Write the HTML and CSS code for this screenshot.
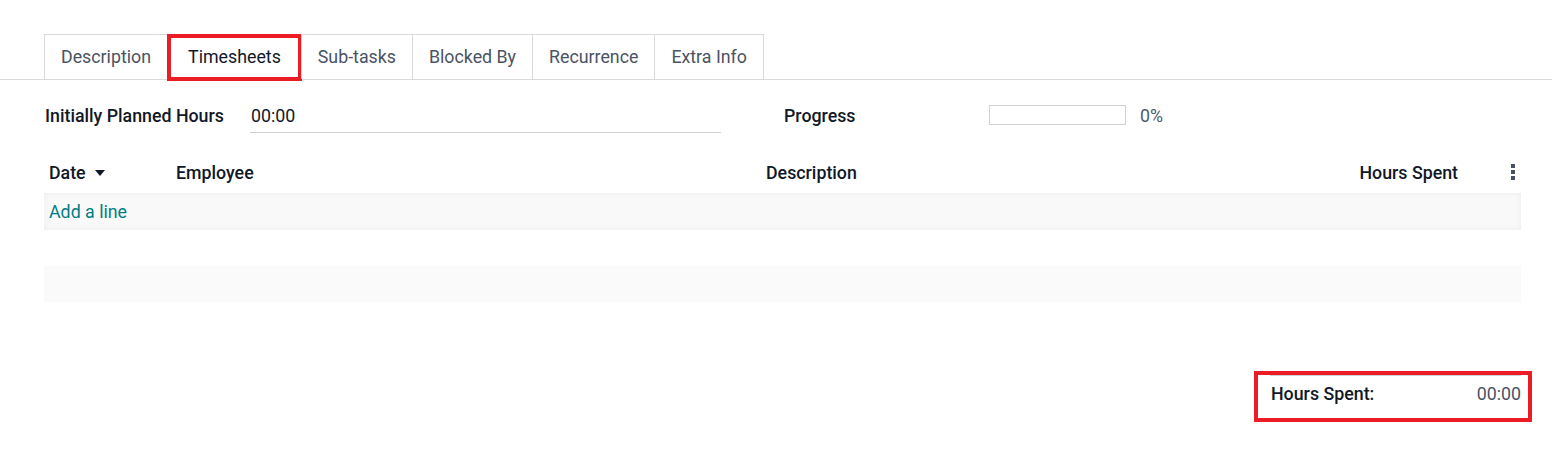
FILE: index.html
```html
<!DOCTYPE html>
<html>
<head>
<meta charset="utf-8">
<link rel="stylesheet" href="styles.css">
</head>
<body>
<div class="page">
  <div class="tabbar">
    <div class="tabs">
      <div class="tab">Description</div>
      <div class="tab active">Timesheets<span class="mark"></span></div>
      <div class="tab">Sub-tasks</div>
      <div class="tab">Blocked By</div>
      <div class="tab">Recurrence</div>
      <div class="tab last">Extra Info</div>
    </div>
  </div>
  <div class="content">
    <div class="fields">
      <div class="label">Initially Planned Hours</div>
      <div class="input">00:00</div>
      <div class="label plabel">Progress</div>
      <div class="progress"><div class="bar"></div><span class="pct">0%</span></div>
    </div>
    <div class="table">
      <div class="thead">
        <div class="th c-date">Date <span class="caret"></span></div>
        <div class="th c-emp">Employee</div>
        <div class="th c-desc">Description</div>
        <div class="th c-hours">Hours Spent</div>
        <div class="th c-opt"><span class="dots"><i></i><i></i><i></i></span></div>
      </div>
      <div class="row addrow"><a class="addline">Add a line</a></div>
      <div class="row empty"></div>
      <div class="row empty shade"></div>
    </div>
    <div class="totals-wrap">
      <div class="totals">
        <span class="tlabel">Hours Spent:</span>
        <span class="tval">00:00</span>
        <span class="mark2"></span>
      </div>
    </div>
  </div>
</div>
</body>
</html>
```
FILE: styles.css
```css
* { box-sizing: border-box; }
html, body { min-height: 476px; }
body {
  margin: 0;
  background: #fff;
  font-family: Roboto, "Noto Sans", sans-serif;
  font-size: 17.8px;
  color: #111827;
}
.page { padding-top: 34px; padding-bottom: 60px; }
.tabbar {
  border-bottom: 1px solid #d8dadd;
  padding-left: 44px;
}
.tabs { display: flex; height: 45px; }
.tab {
  position: relative;
  display: flex;
  align-items: center;
  padding: 0 16px 2px 16px;
  border-top: 1px solid #d8dadd;
  border-left: 1px solid #d8dadd;
  color: #4a5364;
  height: 45px;
}
.tab.last { border-right: 1px solid #d8dadd; }
.tab.active { color: #111827; padding: 0 20px 2px 20px; }
.mark {
  position: absolute;
  left: -1px; right: -1px; top: -1px; bottom: -2px;
  border: 4px solid #ec1c24;
}
.content { padding: 0 31px 0 44px; }
.fields {
  display: flex;
  align-items: center;
  height: 72px;
  padding-bottom: 2px;
}
.label { font-weight: 500; width: 206px; padding-left: 1px; }
.input {
  width: 471px;
  border-bottom: 1px solid #cfd1d4;
  padding: 6px 1px 6px;
  margin-top: 1px;
  color: #111827;
}
.plabel { margin-left: 62px; }
.progress { display: flex; align-items: center; }
.bar {
  width: 137px;
  height: 20px;
  border: 1px solid #cfd1d4;
}
.pct { margin-left: 14px; color: #4a5b6e; }
.thead {
  display: flex;
  align-items: center;
  height: 41px;
  font-weight: 500;
  padding-bottom: 1px;
}
.th { white-space: nowrap; }
.c-date { width: 132px; padding-left: 5px; display: flex; align-items: center; }
.caret {
  display: inline-block;
  width: 0; height: 0;
  border-left: 5px solid transparent;
  border-right: 5px solid transparent;
  border-top: 6px solid #111827;
  margin-left: 9px;
  margin-top: 1px;
}
.c-emp { width: 590px; }
.c-desc { flex: 1; }
.c-hours { width: 200px; text-align: right; }
.c-opt { width: 63px; display: flex; justify-content: flex-end; padding-right: 6px; }
.dots { display: flex; flex-direction: column; gap: 2px; }
.dots i { display: block; width: 4px; height: 4px; background: #4a5364; }
.row { height: 36px; }
.addrow {
  height: 37px;
  background: #f9f9f9;
  box-shadow: inset 0 0 6px rgba(0,0,0,0.06);
  display: flex;
  align-items: center;
  padding-left: 5px;
}
.addline { color: #017e84; cursor: pointer; }
.shade { background: #fafafa; }
.totals-wrap {
  display: flex;
  justify-content: flex-end;
  padding-top: 73px;
}
.totals {
  position: relative;
  width: 251px;
  border-top: 1px solid #cfd1d4;
  display: flex;
  justify-content: space-between;
  align-items: center;
  height: 37px;
  padding: 0 0 1px 1px;
}
.tlabel { font-weight: 500; }
.tval { color: #4a5364; }
.mark2 {
  position: absolute;
  left: -16px; right: -11px; top: -5px; bottom: -10px;
  border: 4px solid #ec1c24;
}
```
